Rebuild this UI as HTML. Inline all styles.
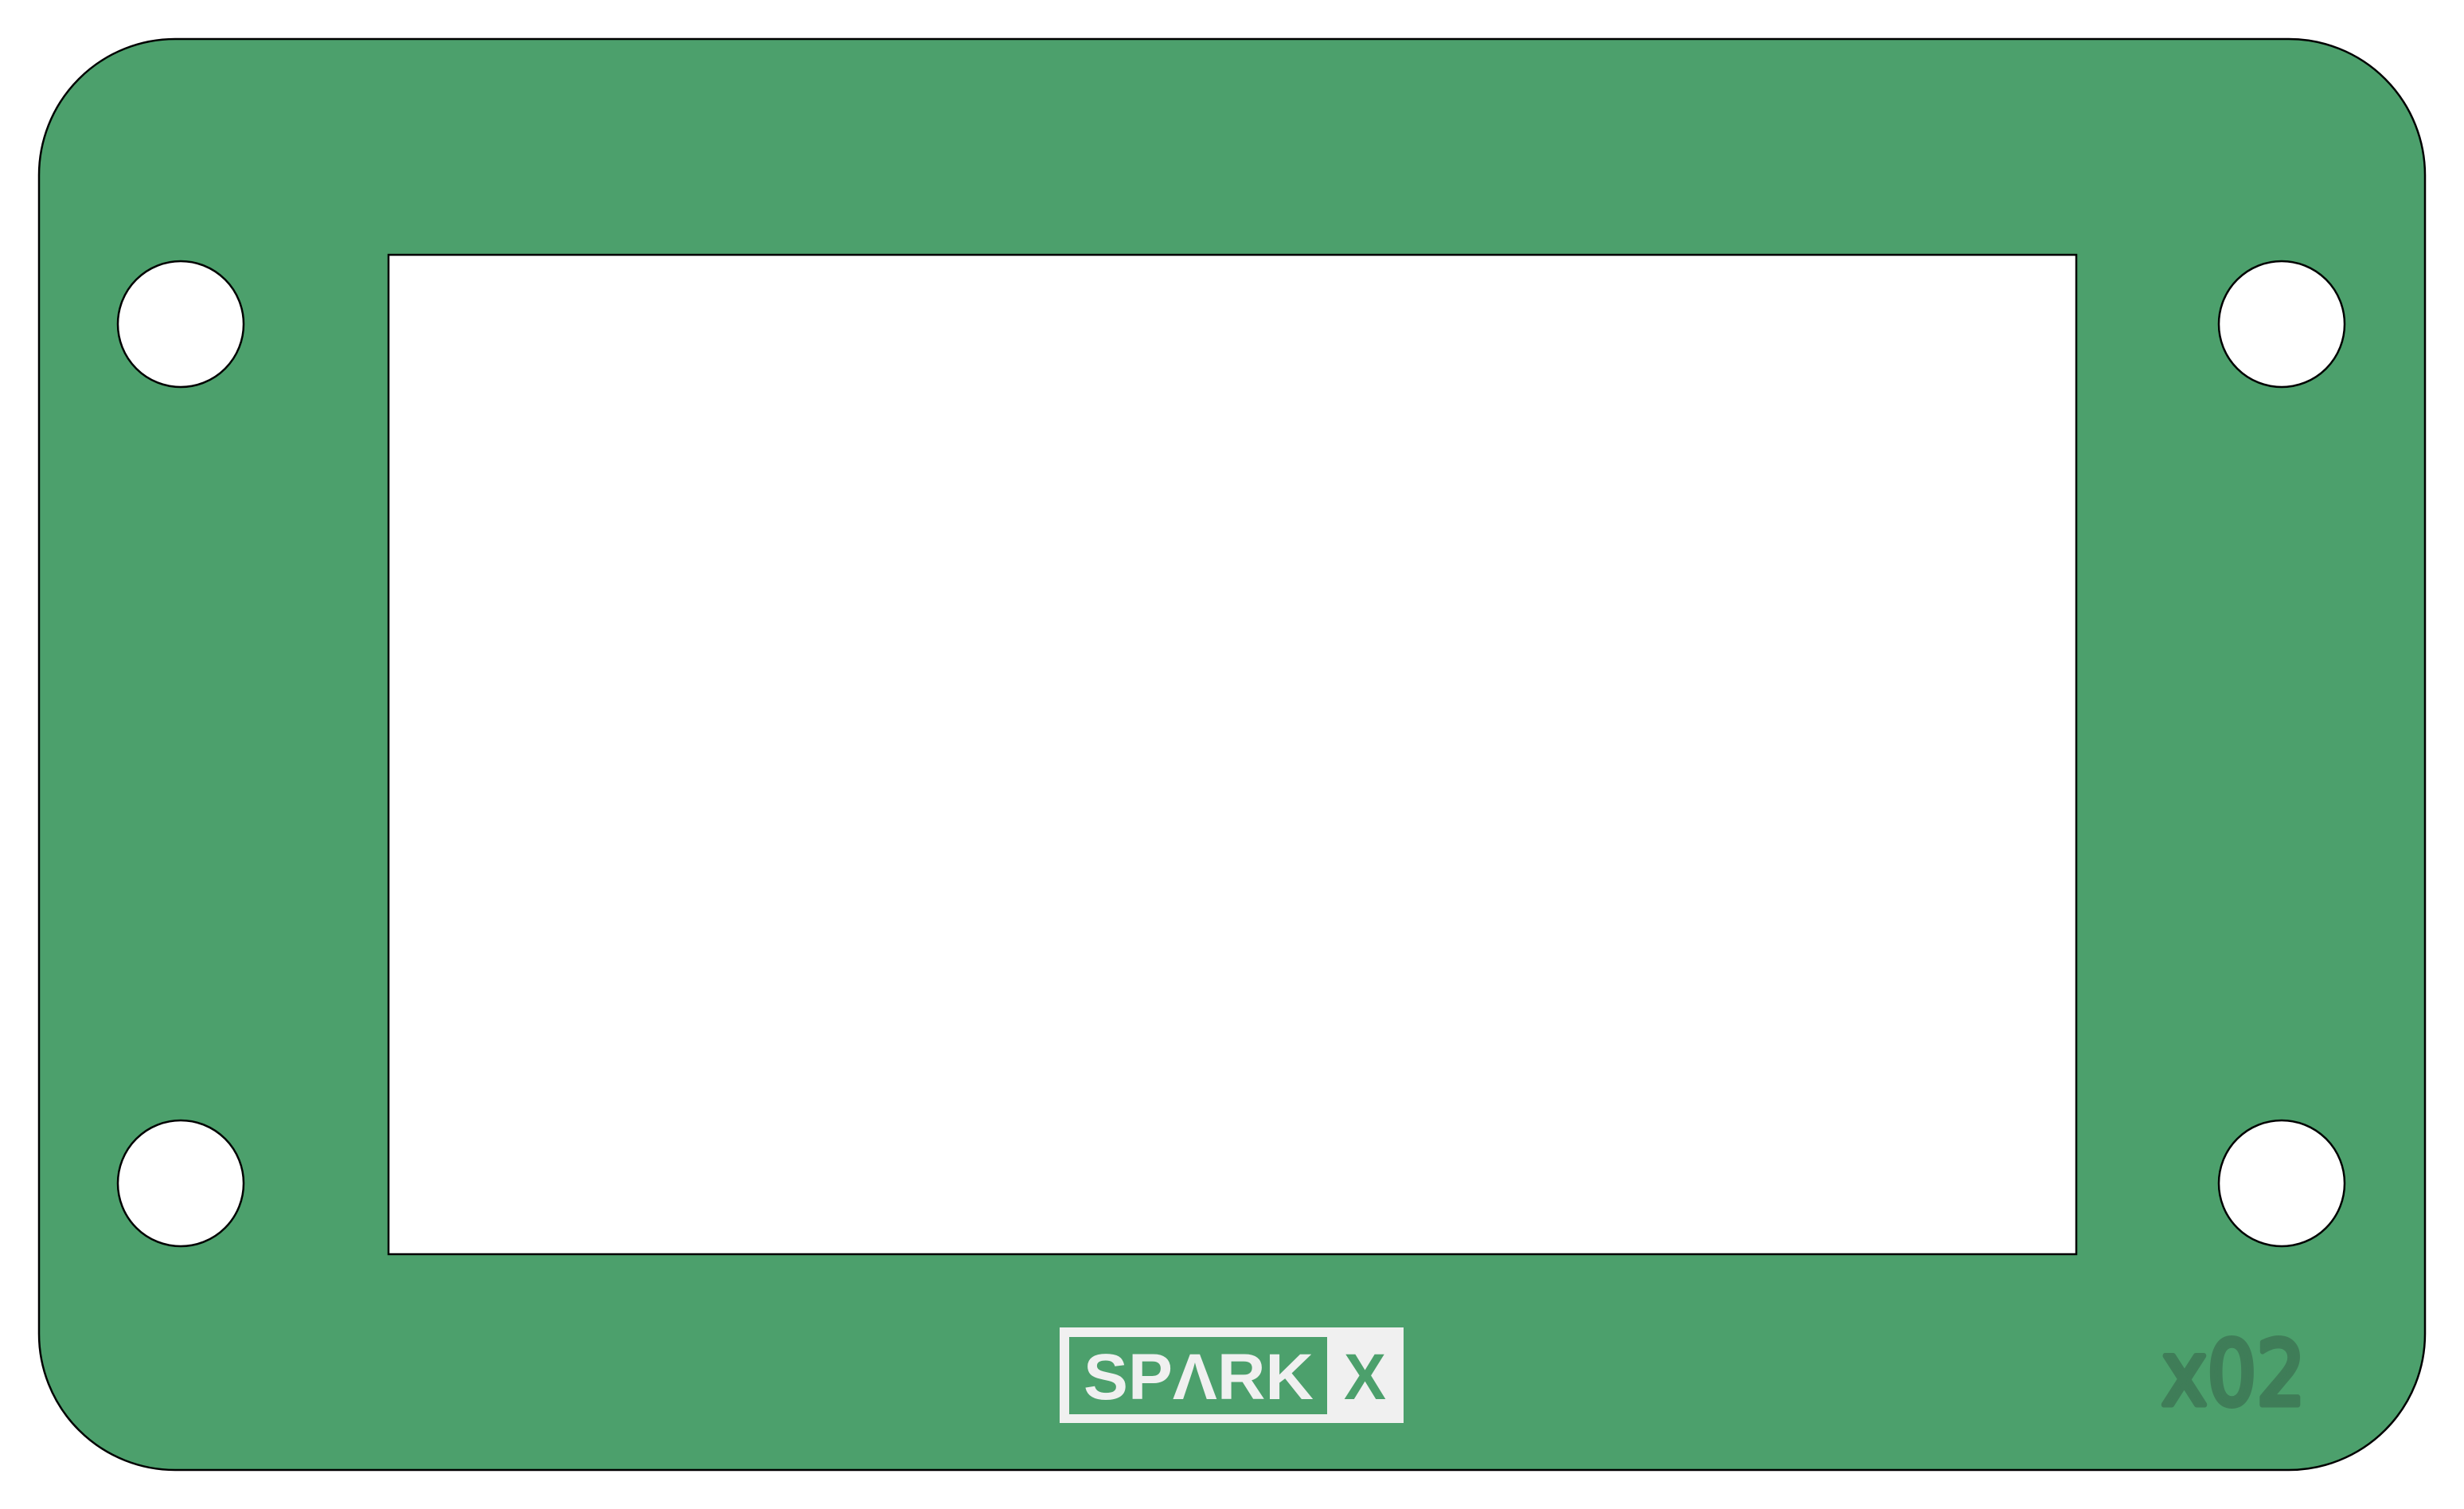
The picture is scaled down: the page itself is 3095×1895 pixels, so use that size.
<!DOCTYPE html>
<html><head><style>html,body{margin:0;padding:0;background:#fff;}svg{display:block}</style></head>
<body>
<svg width="3095" height="1895" viewBox="0 0 3095 1895" xmlns="http://www.w3.org/2000/svg">
<rect x="49" y="49" width="2997" height="1797" rx="171" ry="171" fill="#4ca06c" stroke="#000" stroke-width="2.5"/>
<rect x="488" y="320" width="2120" height="1255" fill="#fff" stroke="#000" stroke-width="2.5"/>
<g fill="#fff" stroke="#000" stroke-width="2.5">
<circle cx="227" cy="407" r="79"/>
<circle cx="2866" cy="407" r="79"/>
<circle cx="227" cy="1486" r="79"/>
<circle cx="2866" cy="1486" r="79"/>
</g>
<rect x="1331" y="1667" width="432" height="120" fill="#f0f0f0"/>
<rect x="1343" y="1679" width="324" height="97" fill="#4ca06c"/>
<text x="1361" y="1757" font-family="Liberation Sans, sans-serif" font-weight="bold" font-size="82" fill="#f0f0f0" textLength="289" lengthAdjust="spacingAndGlyphs">SPΛRK</text>
<text x="1688" y="1757" font-family="Liberation Sans, sans-serif" font-weight="bold" font-size="82" fill="#4ca06c" textLength="53" lengthAdjust="spacingAndGlyphs">X</text>
<text x="2715" y="1764" font-family="DejaVu Sans, sans-serif" font-size="112" fill="#3f7d58" stroke="#3f7d58" stroke-width="7" stroke-linejoin="round" textLength="181" lengthAdjust="spacingAndGlyphs">x02</text>
</svg>
</body></html>
